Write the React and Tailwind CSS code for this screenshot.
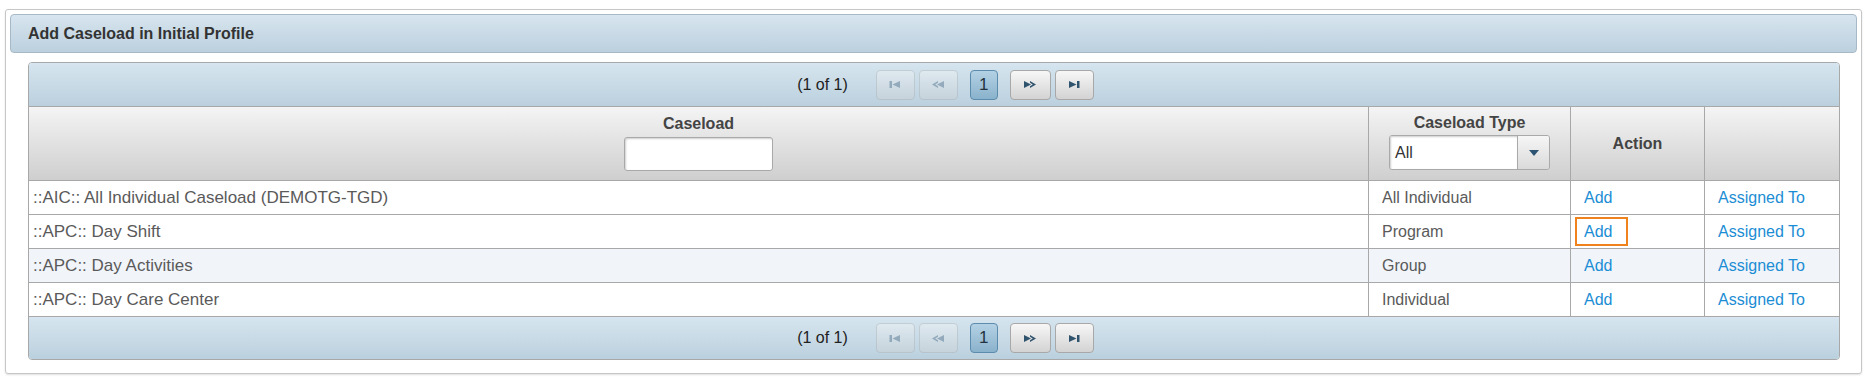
import React from 'react';

const rows = [
    { name: '::AIC:: All Individual Caseload (DEMOTG-TGD)', type: 'All Individual', alt: false },
    { name: '::APC:: Day Shift', type: 'Program', alt: false, focused: true },
    { name: '::APC:: Day Activities', type: 'Group', alt: true },
    { name: '::APC:: Day Care Center', type: 'Individual', alt: false },
];

const PagerIcon = ({ kind }) => {
    return (
        <svg width="14" height="9" viewBox="0 0 14 9" fill="#30536e">
            {kind === 'first' && (
                <>
                    <rect x="1.5" y="1" width="2.5" height="7" />
                    <polygon points="4.5,4.5 12,1 12,8" />
                </>
            )}
            {kind === 'prev' && (
                <>
                    <polygon points="1,4.5 7,1 7,2.8 4.2,4.5 7,6.2 7,8" />
                    <polygon points="6,4.5 13,1 13,8" />
                </>
            )}
            {kind === 'next' && (
                <>
                    <polygon points="1,1 8,4.5 1,8" />
                    <polygon points="7,1 13,4.5 7,8 7,6.2 9.8,4.5 7,2.8" />
                </>
            )}
            {kind === 'last' && (
                <>
                    <polygon points="2,1 9.5,4.5 2,8" />
                    <rect x="10" y="1" width="2.5" height="7" />
                </>
            )}
        </svg>
    );
};

const Pager = ({ bottom }) => {
    const btn = "flex items-center justify-center h-[30px] rounded-[4px] border";
    const grey = "border-[#a8a8a8] bg-gradient-to-b from-[#f7f7f7] to-[#d3d3d3]";
    return (
        <div className={`flex items-center justify-center pl-[23px] h-[43px] bg-gradient-to-b from-[#d6e5ef] to-[#bbd0de] ${bottom ? 'border-t border-[#a8a8a8]' : ''}`}>
            <span className="text-[16px] text-[#222] mr-[28px]">(1 of 1)</span>
            <span className={`${btn} ${grey} w-[39px] opacity-[0.35]`}><PagerIcon kind="first" /></span>
            <span className={`${btn} ${grey} w-[39px] ml-[4px] opacity-[0.35]`}><PagerIcon kind="prev" /></span>
            <span className={`${btn} w-[28px] ml-[12px] border-[#5b8bad] bg-gradient-to-b from-[#b4d1e4] to-[#8ab2cc] text-[17px] text-[#24333f]`}>1</span>
            <span className={`${btn} ${grey} w-[41px] ml-[12px]`}><PagerIcon kind="next" /></span>
            <span className={`${btn} ${grey} w-[39px] ml-[4px]`}><PagerIcon kind="last" /></span>
        </div>
    );
};

const App = () => {
    return (
        <div className="bg-white min-h-[378px] pt-[9px] pl-[5px] font-['Liberation_Sans',Arial,sans-serif]">
            <div className="w-[1857px] border border-[#c6c6c6] rounded-[3px] pt-[4px] pb-[13px] px-[4px] shadow-[0_1px_2px_rgba(0,0,0,0.12)]">
                {/*Panel header*/}
                <div className="h-[39px] flex items-center pl-[17px] border border-[#a7b9c6] rounded-[4px] bg-gradient-to-b from-[#d7e5ef] to-[#bcd0de]">
                    <h3 className="text-[16px] font-bold text-[#333]">Add Caseload in Initial Profile</h3>
                </div>

                {/*Data table*/}
                <div className="mt-[9px] ml-[18px] mr-[17px] border border-[#a8a8a8] rounded-[4px] overflow-hidden">
                    <Pager />

                    <div className="grid grid-cols-[1340px_202px_134px_1fr] h-[74px] border-t border-[#a8a8a8] bg-gradient-to-b from-[#f4f4f4] to-[#cfcfcf] text-[16px] font-bold text-[#444]">
                        <div className="flex flex-col items-center pt-[8px] border-r border-[#a8a8a8]">
                            <span className="leading-[18px]">Caseload</span>
                            <input className="mt-[4px] w-[149px] h-[34px] bg-white border border-[#a9a9a9] rounded-[3px] shadow-[inset_1px_1px_2px_rgba(0,0,0,0.2)] outline-none" />
                        </div>
                        <div className="flex flex-col items-center pt-[7px] border-r border-[#a8a8a8]">
                            <span className="leading-[18px]">Caseload Type</span>
                            <div className="mt-[3px] w-[161px] h-[35px] flex border border-[#a9a9a9] rounded-[3px] overflow-hidden">
                                <div className="flex-1 flex items-center pl-[5px] bg-white font-normal text-[#333] shadow-[inset_1px_1px_2px_rgba(0,0,0,0.2)]">All</div>
                                <div className="w-[32px] flex items-center justify-center border-l border-[#a9a9a9] bg-gradient-to-b from-[#f6f6f6] to-[#dadada]">
                                    <svg width="10" height="6" viewBox="0 0 10 6" fill="#2d5473">
                                        <polygon points="0,0 10,0 5,6" />
                                    </svg>
                                </div>
                            </div>
                        </div>
                        <div className="flex items-center justify-center border-r border-[#a8a8a8]">Action</div>
                        <div></div>
                    </div>

                    {rows.map((row) => (
                        <div
                            key={row.name}
                            className={`grid grid-cols-[1340px_202px_134px_1fr] h-[34px] border-t border-[#a8a8a8] text-[16px] text-[#5a5a5a] ${row.alt ? 'bg-[#f1f5fa]' : 'bg-white'}`}
                        >
                            <div className="flex items-center pl-[4px] text-[17px] border-r border-[#a8a8a8]">{row.name}</div>
                            <div className="flex items-center pl-[13px] border-r border-[#a8a8a8]">{row.type}</div>
                            <div className="flex items-center pl-[13px] border-r border-[#a8a8a8]">
                                {row.focused ? (
                                    <a href="#" className="-ml-[9px] w-[53px] h-[29px] flex items-center pl-[7px] border-2 border-[#f0821e] text-[#1b8dd4]">Add</a>
                                ) : (
                                    <a href="#" className="text-[#1b8dd4]">Add</a>
                                )}
                            </div>
                            <div className="flex items-center pl-[13px]">
                                <a href="#" className="text-[#1b8dd4]">Assigned To</a>
                            </div>
                        </div>
                    ))}

                    <Pager bottom />
                </div>
            </div>
        </div>
    );
};

export default App;
